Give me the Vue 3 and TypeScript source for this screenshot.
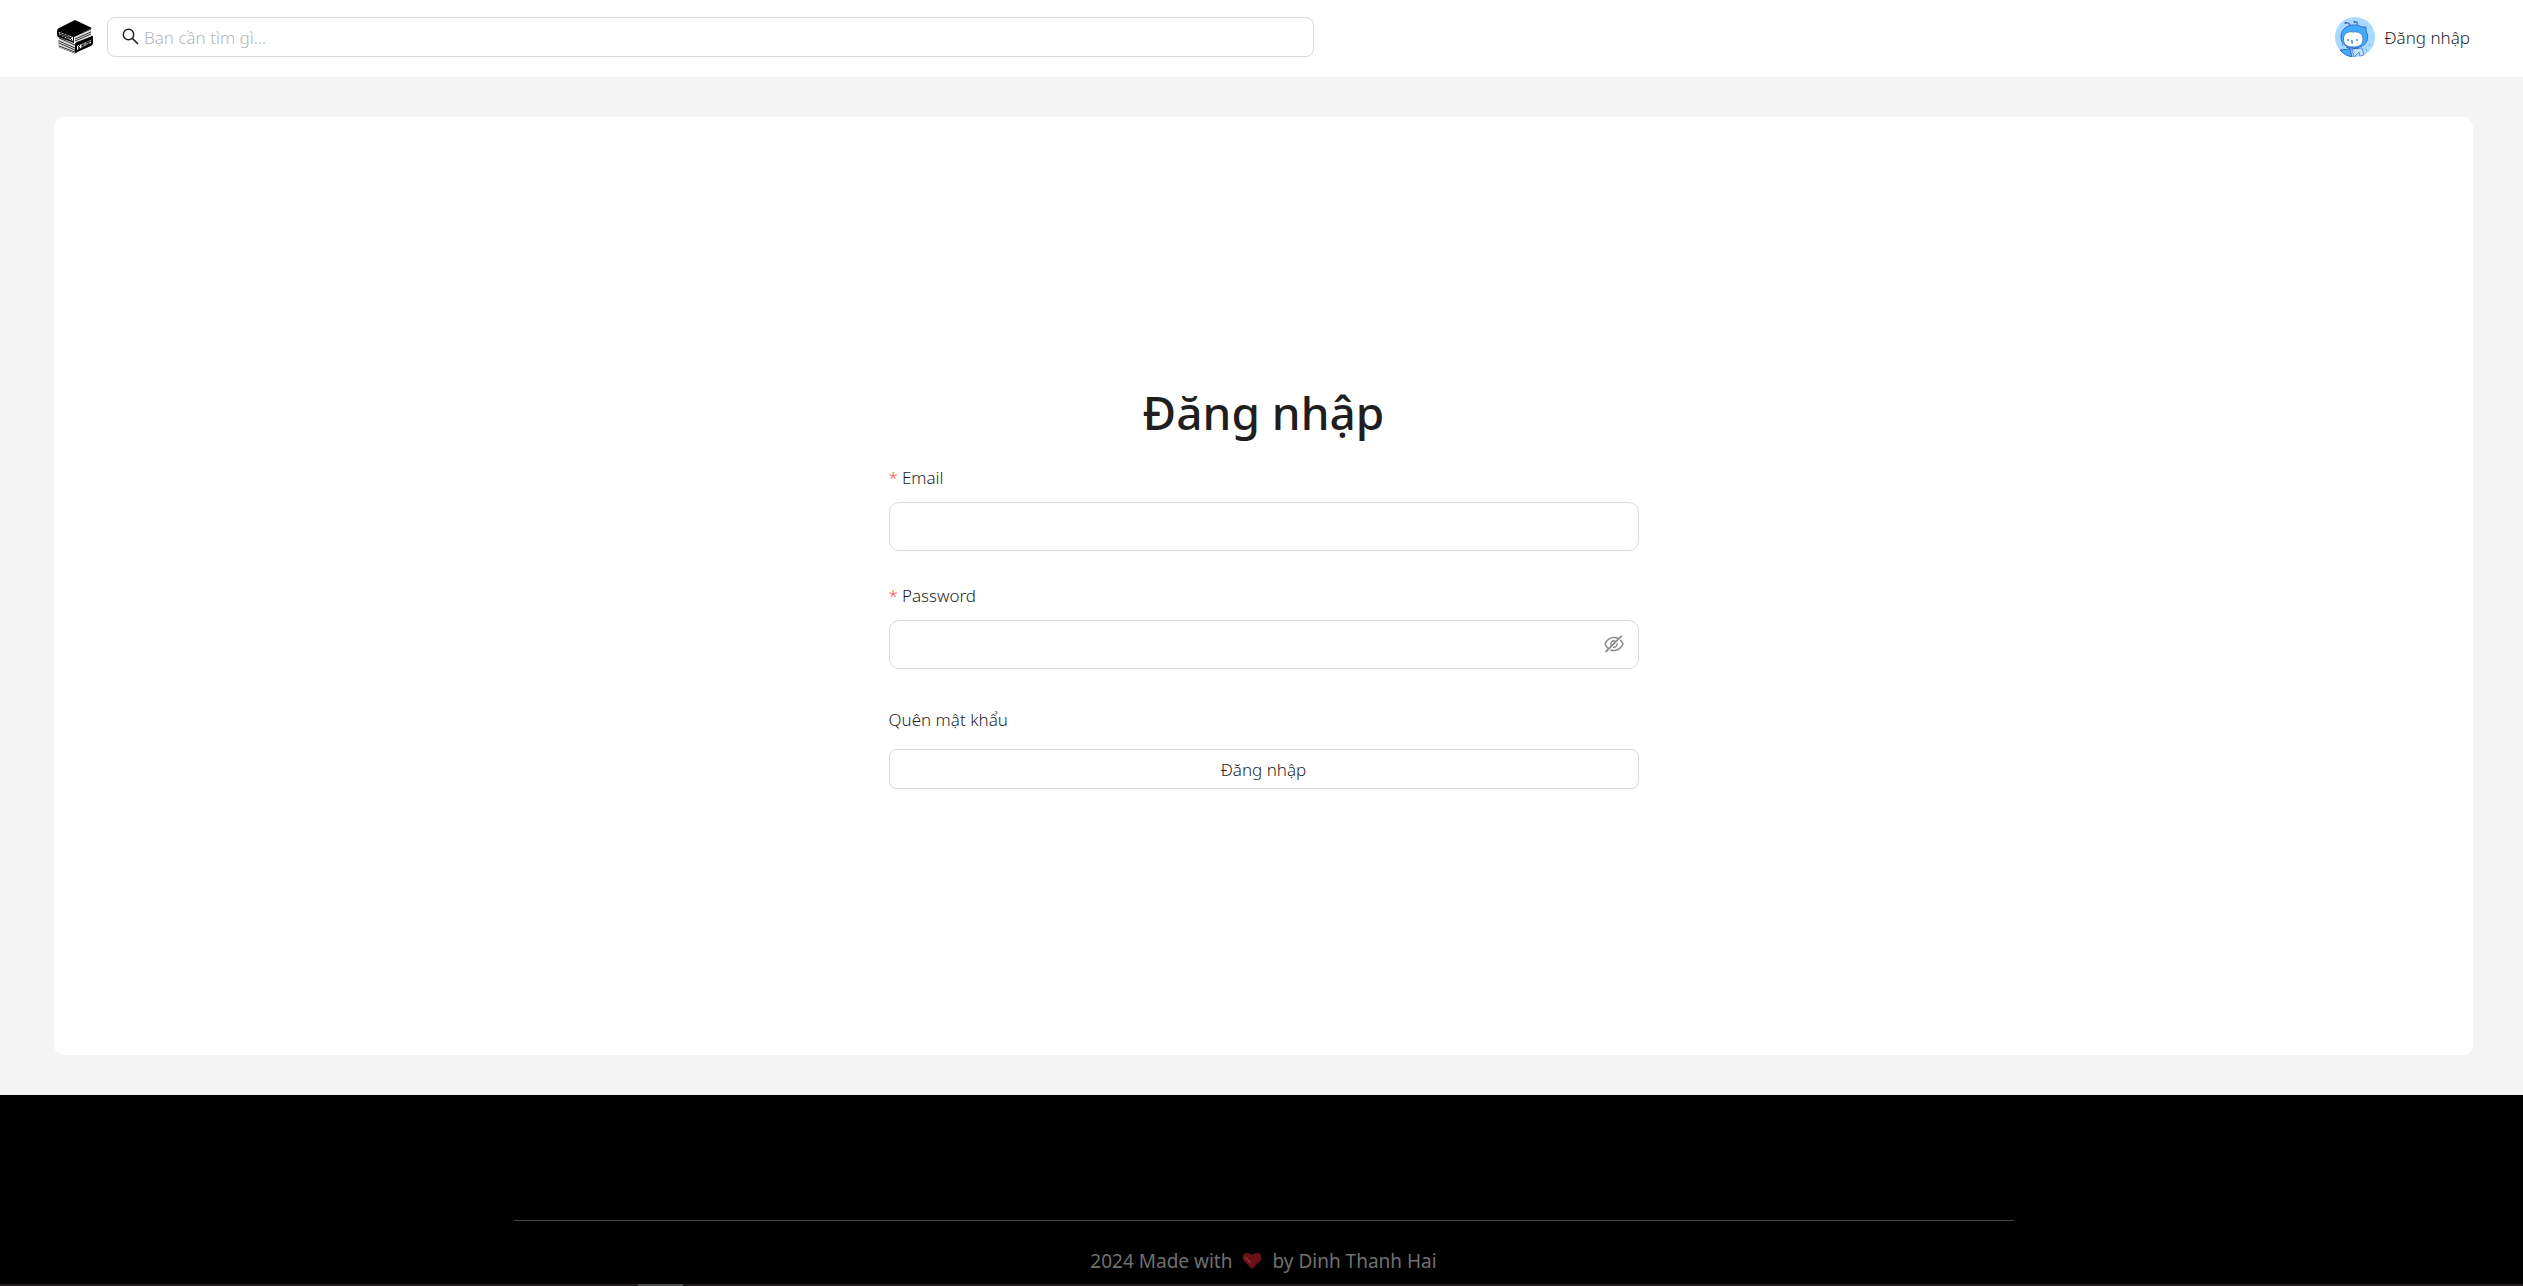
<script setup lang="ts">
import { ref } from 'vue'

const query = ref('')
const email = ref('')
const password = ref('')
const visible = ref(false)
</script>

<template>
  <div class="page">
    <header class="header">
      <a class="logo" href="#" aria-label="Book Shop">
        <svg viewBox="0 0 36 36" width="36" height="36">
          <path d="M2 21 18 28 35 17V22L18 34 2 28Z" fill="#fff" stroke="#222" />
          <path d="M2 18 18 25V34L1 28ZM18 18 34 10V20L18 28Z" fill="#ddd" />
          <path d="M2 19 18 26M2 22 18 29M2 24 18 31M2 27 18 33M18 17 34 10M18 20 34 13M18 22 34 15M18 25 34 18M19 32 34 24" stroke="#333" />
          <path d="M18 1 35 9 17 18V24L1 18Q0 17 0 15V12Q0 10 2 9Z" fill="#000" />
          <path d="M18 26Q18 24 20 23L36 17V24Q36 26 34 27L18 34Z" fill="#000" />
          <path d="M2 13 16 18V22L2 16Z" fill="#fff" />
          <path d="M3 14V16L5 17V15ZM6 15V17L8 18V16ZM9 16V18L11 19V17ZM12 17V20M12 19 15 18M13 19 15 21" stroke="#000" fill="none" />
          <path d="M20 27 34 21V24L20 31Z" fill="#fff" />
          <path d="M23 26 21 28 23 29 21 30M25 25V29M25 27 27 26M27 24V28M29 24V27L31 26V23ZM32 22V26M32 23 34 22" stroke="#000" fill="none" />
        </svg>
      </a>
      <label class="search">
        <svg viewBox="0 0 18 18" width="18" height="18" aria-hidden="true">
          <circle cx="6.5" cy="6.5" r="5.2" fill="none" stroke="#222" stroke-width="1.5" />
          <path d="m10.5 10.5 5.5 5.5" stroke="#222" stroke-width="1.7" />
        </svg>
        <input v-model="query" type="text" placeholder="Bạn cần tìm gì..." aria-label="Tìm kiếm" />
      </label>
      <a class="account" href="#">
        <svg class="avatar" viewBox="0 0 40 40" width="40" height="40" aria-hidden="true">
          <circle cx="20" cy="20" r="20" fill="#a9d9ff" />
          <path d="M15 8Q14 5 11 6M22 8Q23 4 19 5" fill="none" stroke="#2c5fa8" stroke-width="1.1" />
          <circle cx="10.5" cy="6" r="1" fill="#2c5fa8" />
          <circle cx="19.5" cy="5" r="1" fill="#2c5fa8" />
          <path d="M6 20C6 12 12 8 19 8Q24 8 27 10L31 10V14C34 20 33 26 27 29Q19 33 11 29Q6 26 6 20Z" fill="#41adfa" stroke="#356bcb" />
          <path d="M8.500 22C8.500 16 13 14 18 15C24 14 28 17 28 22C28 28 24 30 18 30C12 30 8.500 28 8.500 22Z" fill="#fff" stroke="#4b80ce" />
          <path d="M13 22V24M22 22V24M17 23V26H18" fill="none" stroke="#2469c9" stroke-width="1.2" />
          <path d="M5 33 15 32 17 40Q10 39 5 33Z" fill="#41adfa" stroke="#356bcb" />
          <path d="M17 32 27 31 29 38 25 39 24 35 19 40Z" fill="#c3e3ff" stroke="#5b91dc" />
          <path d="m11 30 5 2 8-1" fill="none" stroke="#356bcb" />
          <path d="M34 28h1M31 33h1M7 28h1" stroke="#62aef5" stroke-width="2" />
        </svg>
        <span class="caption">Đăng nhập</span>
      </a>
    </header>

    <main class="main">
      <section class="card">
        <form class="form" @submit.prevent>
          <h1>Đăng nhập</h1>
          <label class="label" for="email"><span class="star">*</span>Email</label>
          <div class="field">
            <input id="email" v-model="email" type="text" />
          </div>
          <label class="label" for="password"><span class="star">*</span>Password</label>
          <div class="field">
            <input id="password" v-model="password" :type="visible ? 'text' : 'password'" />
            <button class="eye" type="button" aria-label="Hiện mật khẩu" @click="visible = !visible">
              <svg viewBox="64 64 896 896" width="20" height="20" fill="currentColor">
                <path d="M942.2 486.2Q889.47 375.11 816.7 305l-50.88 50.88C807.31 395.53 843.45 447.4 874.7 512 791.5 684.2 673.4 766 512 766q-72.67 0-133.87-22.38L323 798.75Q408 838 512 838q288.3 0 430.2-300.3a60.29 60.29 0 000-51.5zm-63.57-320.64L836 122.88a8 8 0 00-11.32 0L715.31 232.2Q624.86 186 512 186q-288.3 0-430.2 300.3a60.3 60.3 0 000 51.5q56.69 119.4 136.5 191.41L112.48 835a8 8 0 000 11.31L155.17 889a8 8 0 0011.31 0l712.15-712.12a8 8 0 000-11.32zM149.3 512C232.6 339.8 350.7 258 512 258c54.54 0 104.13 9.36 149.12 28.39l-70.3 70.3a176 176 0 00-238.13 238.13l-83.42 83.42C223.1 637.49 183.3 582.28 149.3 512zm246.7 0a112.11 112.11 0 01146.2-106.69L401.31 546.2A112 112 0 01396 512z" />
                <path d="M508 624c-3.46 0-6.87-.16-10.25-.47l-52.82 52.82a176.09 176.09 0 00227.42-227.42l-52.82 52.82c.31 3.38.47 6.79.47 10.25a111.94 111.94 0 01-112 112z" />
              </svg>
            </button>
          </div>
          <a class="forgot" href="#">Quên mật khẩu</a>
          <button class="submit" type="submit">Đăng nhập</button>
        </form>
      </section>
    </main>

    <footer class="footer">
      <hr />
      <p>
        <span>2024 Made with</span>
        <svg viewBox="0 0 20 18" width="20" height="18" aria-label="love">
          <path d="M10 17 2 9C-1 5 1 1 5 1Q8 1 10 3Q12 1 15 1C19 1 21 5 18 9Z" fill="#6b1013" />
          <path d="m4 6 4 4" stroke="#803038" stroke-width="2" stroke-linecap="round" />
        </svg>
        <span>by Dinh Thanh Hai</span>
      </p>
    </footer>
    <div class="strip"><span></span></div>
  </div>
</template>

<style>
body {
  margin: 0;
}
</style>

<style scoped>
* {
  box-sizing: border-box;
}
.page {
  display: flex;
  flex-direction: column;
  min-height: 100vh;
  background: #f4f4f4;
  color: #1f1f1f;
  font-family: "Noto Sans", "Open Sans", sans-serif;
  font-size: 17px;
  font-weight: 300;
  line-height: 24px;
}
.header {
  display: flex;
  align-items: center;
  height: 77px;
  padding: 0 53px 3px 57px;
  background: #fff;
}
.logo {
  display: flex;
  margin-right: 14px;
}
.search {
  display: flex;
  align-items: center;
  gap: 4px;
  width: 50%;
  max-width: 1207px;
  height: 40px;
  padding: 0 14px;
  border: 1px solid #d9d9d9;
  border-radius: 8px;
}
input,
button {
  padding: 0;
  border: 0;
  outline: 0;
  background: none;
  color: inherit;
  font: inherit;
}
.search input,
.field input {
  flex: 1;
  min-width: 0;
}
.search input {
  padding-top: 2px;
}
.search input::placeholder {
  color: #b5b5b5;
  opacity: 1;
}
a {
  color: inherit;
  text-decoration: none;
}
.account {
  display: flex;
  align-items: center;
  gap: 10px;
  margin-left: auto;
}
.caption {
  padding-top: 2px;
}
.main {
  display: flex;
  flex: 1;
  padding: 40px 50px 40px 54px;
}
.card {
  display: flex;
  flex: 1;
  align-items: center;
  justify-content: center;
  border-radius: 10px;
  background: #fff;
}
.form {
  display: flex;
  flex-direction: column;
  width: 750px;
}
h1 {
  margin: 0 0 26px;
  font-size: 46px;
  font-weight: 500;
  line-height: 56px;
  text-align: center;
}
.label {
  margin-bottom: 12px;
}
.star {
  margin-right: 4px;
  color: #ff4d4f;
}
.field {
  display: flex;
  align-items: center;
  height: 49px;
  margin-bottom: 33px;
  padding: 0 14px;
  border: 1px solid #d9d9d9;
  border-radius: 10px;
}
.eye {
  display: flex;
  color: #8c8c8c;
  cursor: pointer;
}
.forgot {
  align-self: flex-start;
  margin: 6px 0 17px;
}
.submit {
  height: 40px;
  padding-top: 2px;
  border: 1px solid #d9d9d9;
  border-radius: 8px;
  box-shadow: 0 2px 0 rgba(0, 0, 0, 0.02);
  cursor: pointer;
}
.footer {
  height: 189px;
  padding: 125px 50px 0 54px;
  background: #000;
  color: #707070;
  font-size: 19px;
  font-weight: 400;
}
hr {
  width: 100%;
  max-width: 1500px;
  height: 1px;
  margin: 0 auto 28px;
  border: 0;
  background: #444;
}
.footer p {
  display: flex;
  align-items: center;
  justify-content: center;
  gap: 10px;
  margin: 0;
}
.strip {
  height: 2px;
  background: #1f1b1d;
}
.strip span {
  display: block;
  width: 45px;
  height: 2px;
  margin-left: 638px;
  background: #4a4a4a;
}
</style>
